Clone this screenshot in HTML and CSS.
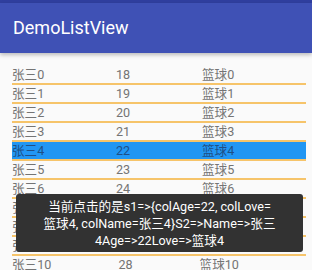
FILE: index.html
```html
<!DOCTYPE html>
<html>
<head>
<meta charset="utf-8">
<link rel="stylesheet" href="styles.css">
</head>
<body>
<div class="status"></div>
<header class="toolbar">DemoListView</header>
<ul class="list">
  <li class="row"><span>张三0</span><span>18</span><span>篮球0</span></li>
  <li class="row"><span>张三1</span><span>19</span><span>篮球1</span></li>
  <li class="row"><span>张三2</span><span>20</span><span>篮球2</span></li>
  <li class="row"><span>张三3</span><span>21</span><span>篮球3</span></li>
  <li class="row selected"><span>张三4</span><span>22</span><span>篮球4</span></li>
  <li class="row"><span>张三5</span><span>23</span><span>篮球5</span></li>
  <li class="row"><span>张三6</span><span>24</span><span>篮球6</span></li>
  <li class="row"><span>张三7</span><span>25</span><span>篮球7</span></li>
  <li class="row"><span>张三8</span><span>26</span><span>篮球8</span></li>
  <li class="row"><span>张三9</span><span>27</span><span>篮球9</span></li>
  <li class="row"><span>张三10</span><span>28</span><span>篮球10</span></li>
</ul>
<div class="toast"><p class="toast-text">当前点击的是s1=&gt;{colAge=22, colLove=篮球4, colName=张三4}S2=&gt;Name=&gt;张三4Age=&gt;22Love=&gt;篮球4</p></div>
</body>
</html>
```
FILE: styles.css
```css
html, body {
  margin: 0;
  padding: 0;
  width: 312px;
  height: 270px;
  overflow: hidden;
  background: #fafafa;
  font-family: Roboto, "Noto Sans CJK SC", sans-serif;
  position: relative;
}
.status {
  height: 3px;
  background: #303f9f;
}
.toolbar {
  height: 50px;
  line-height: 50px;
  padding-left: 13px;
  background: #3f51b5;
  color: #fff;
  font-size: 18px;
  box-shadow: 0 2px 4px rgba(0,0,0,0.25);
  position: relative;
}
.list {
  list-style: none;
  margin: 13px 6px 0 12px;
  padding: 0;
}
.row {
  display: flex;
  height: 16px;
  padding-top: 1px;
  line-height: 16px;
  font-size: 12.6px;
  color: #747474;
  border-bottom: 2px solid #f6c46a;
  box-sizing: content-box;
}
.row span {
  flex: 1 1 auto;
  white-space: nowrap;
}
.row.selected {
  background: #2196f3;
  color: #1f4f86;
}
.toast {
  position: absolute;
  left: 16px;
  top: 194px;
  width: 287px;
  height: 58px;
  box-sizing: border-box;
  padding: 0 26px;
  display: flex;
  align-items: center;
  justify-content: center;
  background: #323232;
  border-radius: 3px;
}
.toast-text {
  margin: 0;
  color: #fff;
  font-size: 12.6px;
  line-height: 17px;
  text-align: center;
  line-break: anywhere;
}
```
